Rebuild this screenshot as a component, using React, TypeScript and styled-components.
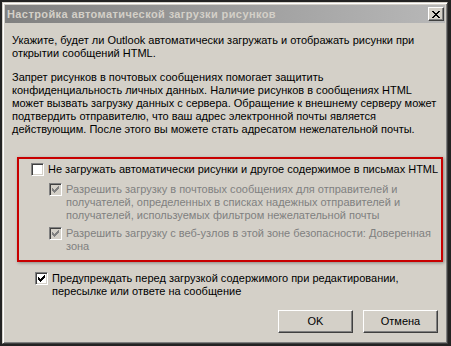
import styled, { createGlobalStyle } from 'styled-components';

const GlobalStyle = createGlobalStyle`
    html, body, #root {
        margin: 0;
        padding: 0;
        height: 100%;
    }
    html, body {
        background: #232323;
    }
    body {
        width: 451px;
        height: 346px;
        padding: 2px 3px 2px 2px;
        box-sizing: border-box;
        font-family: 'Liberation Sans', Arial, sans-serif;
        font-size: 11px;
    }
`;

function Check({ on, disabled }: { on: boolean; disabled?: boolean }) {
    const fill = disabled ? '#808080' : '#000';
    const cols = [2, 3, 4, 3, 2, 1, 0];
    return (
        <Box disabled={disabled}>
            {on && (
                <svg width="7" height="7" viewBox="0 0 7 7" shapeRendering="crispEdges">
                    {cols.map((y, x) => (
                        <rect key={x} x={x} y={y} width="1" height="3" fill={fill} />
                    ))}
                </svg>
            )}
        </Box>
    );
}

export default function App() {
    return (
        <>
            <GlobalStyle />
            <Window>
                <TitleBar>
                    <Title>Настройка автоматической загрузки рисунков</Title>
                    <CloseButton>
                        <svg width="8" height="7" viewBox="0 0 8 7" shapeRendering="crispEdges">
                            <path d="M0 0h2v1h-2zM6 0h2v1h-2zM1 1h2v1h-2zM5 1h2v1h-2zM2 2h4v1h-4zM3 3h2v1h-2zM2 4h4v1h-4zM1 5h2v1h-2zM5 5h2v1h-2zM0 6h2v1h-2zM6 6h2v1h-2z" fill="#000" />
                        </svg>
                    </CloseButton>
                </TitleBar>
                <Content>
                    <Para>
                        Укажите, будет ли Outlook автоматически загружать и отображать рисунки при<br />
                        открытии сообщений HTML.
                    </Para>
                    <Para>
                        Запрет рисунков в почтовых сообщениях помогает защитить<br />
                        конфиденциальность личных данных. Наличие рисунков в сообщениях HTML<br />
                        может вызвать загрузку данных с сервера. Обращение к внешнему серверу может<br />
                        подтвердить отправителю, что ваш адрес электронной почты является<br />
                        действующим. После этого вы можете стать адресатом нежелательной почты.
                    </Para>
                    <Group>
                        <CheckRow>
                            <Check on={false} />
                            <Label>Не загружать автоматически рисунки и другое содержимое в письмах HTML</Label>
                        </CheckRow>
                        <SubRow>
                            <Check on disabled />
                            <Label disabled>
                                Разрешить загрузку в почтовых сообщениях для отправителей и<br />
                                получателей, определенных в списках надежных отправителей и<br />
                                получателей, используемых фильтром нежелательной почты
                            </Label>
                        </SubRow>
                        <SubRow>
                            <Check on disabled />
                            <Label disabled>
                                Разрешить загрузку с веб-узлов в этой зоне безопасности: Доверенная<br />
                                зона
                            </Label>
                        </SubRow>
                    </Group>
                    <WarnRow>
                        <Check on />
                        <Label>
                            Предупреждать перед загрузкой содержимого при редактировании,<br />
                            пересылке или ответе на сообщение
                        </Label>
                    </WarnRow>
                    <ButtonRow>
                        <Button>OK</Button>
                        <Button>Отмена</Button>
                    </ButtonRow>
                </Content>
            </Window>
        </>
    );
}

const Window = styled.div`
    width: 100%;
    height: 100%;
    box-sizing: border-box;
    display: flex;
    flex-direction: column;
    background: #d4d0c8;
    border: 1px solid;
    border-color: #d4d0c8 #404040 #404040 #d4d0c8;
    box-shadow: inset 1px 1px 0 #fff, inset -1px -1px 0 #808080;
    padding: 2px;
`

const TitleBar = styled.div`
    height: 18px;
    flex-shrink: 0;
    display: flex;
    align-items: center;
    justify-content: space-between;
    padding: 0 1px 0 2px;
    background: linear-gradient(90deg, #808080, #b8b8b8);
`

const Title = styled.span`
    color: #d4d0c8;
    font-weight: 700;
    font-size: 11px;
    letter-spacing: 0.4px;
    white-space: nowrap;
`

const CloseButton = styled.div`
    width: 16px;
    height: 14px;
    box-sizing: border-box;
    display: flex;
    align-items: center;
    justify-content: center;
    background: #d4d0c8;
    border: 1px solid;
    border-color: #fff #404040 #404040 #fff;
    box-shadow: inset -1px -1px 0 #808080;
`

const Content = styled.div`
    flex: 1;
    display: flex;
    flex-direction: column;
    padding: 11px 2px 8px 7px;
    color: #000;
    line-height: 13px;
`

const Para = styled.p`
    margin: 0 0 11px;
    white-space: nowrap;
`

const Group = styled.div`
    margin: 10px 0 0 5px;
    border: 2px solid #c80000;
    box-shadow: 1px 1px 3px rgba(0, 0, 0, 0.35);
    padding: 4px 0 7px 12px;
    display: flex;
    flex-direction: column;
    gap: 5px;
`

const CheckRow = styled.div`
    display: flex;
    align-items: flex-start;
    gap: 4px;
    margin-bottom: 2px;
`

const SubRow = styled(CheckRow)`
    margin: 0 0 0 18px;
`

const WarnRow = styled(CheckRow)`
    margin: 10px 0 0 23px;
`

const Box = styled.div<{ disabled?: boolean }>`
    width: 13px;
    height: 13px;
    flex-shrink: 0;
    box-sizing: border-box;
    display: flex;
    align-items: center;
    justify-content: center;
    background: ${p => (p.disabled ? '#d4d0c8' : '#fff')};
    border: 1px solid;
    border-color: #808080 #fff #fff #808080;
    box-shadow: inset 1px 1px 0 #404040, inset -1px -1px 0 #d4d0c8;
`

const Label = styled.span<{ disabled?: boolean }>`
    white-space: nowrap;
    color: ${p => (p.disabled ? '#808080' : '#000')};
`

const ButtonRow = styled.div`
    margin-top: auto;
    display: flex;
    justify-content: flex-end;
    gap: 10px;
    padding-right: 5px;
`

const Button = styled.div`
    width: 75px;
    height: 23px;
    box-sizing: border-box;
    display: flex;
    align-items: center;
    justify-content: center;
    background: #d4d0c8;
    border: 1px solid;
    border-color: #fff #404040 #404040 #fff;
    box-shadow: inset -1px -1px 0 #808080;
`
